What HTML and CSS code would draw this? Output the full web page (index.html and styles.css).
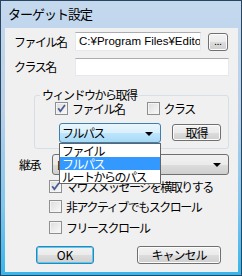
FILE: index.html
```html
<!DOCTYPE html>
<html lang="ja">
<head>
<meta charset="utf-8">
<link rel="stylesheet" href="styles.css">
</head>
<body>
<div class="win">
  <div class="titlebar">ターゲット設定</div>
  <div class="client">
    <div class="row r1">
      <span class="lbl">ファイル名</span>
      <div class="edit e1">C:¥Program Files¥Edito</div>
      <button class="btn dots">...</button>
    </div>
    <div class="row r2">
      <span class="lbl">クラス名</span>
      <div class="edit e2"></div>
    </div>
    <fieldset class="grp">
      <legend>ウィンドウから取得</legend>
      <div class="chkrow">
        <span class="chk c-file"><span class="box"><svg width="13" height="13" viewBox="0 0 13 13"><path d="M3.2 6.2 L5.4 9.2 L10 3" fill="none" stroke="#4a5d94" stroke-width="1.8"/></svg></span>ファイル名</span>
        <span class="chk c-class"><span class="box"></span>クラス</span>
      </div>
      <div class="selrow">
        <div class="combo focus">フルパス<span class="arrow"></span></div>
        <button class="btn get">取得</button>
      </div>
    </fieldset>
    <div class="row r3">
      <span class="lbl lbl3">継承</span>
      <div class="combo c2">D<span class="arrow"></span></div>
    </div>
    <div class="opts">
      <span class="chk o1"><span class="box"><svg width="13" height="13" viewBox="0 0 13 13"><path d="M3.2 6.2 L5.4 9.2 L10 3" fill="none" stroke="#4a5d94" stroke-width="1.8"/></svg></span>マウスメッセージを横取りする</span>
      <span class="chk o2"><span class="box"></span>非アクティブでもスクロール</span>
      <span class="chk o3"><span class="box"></span>フリースクロール</span>
    </div>
    <div class="btnrow">
      <button class="btn ok">OK</button>
      <button class="btn cancel">キャンセル</button>
    </div>
    <ul class="droplist">
      <li>ファイル</li>
      <li class="sel">フルパス</li>
      <li>ルートからのパス</li>
    </ul>
  </div>
</div>
</body>
</html>
```
FILE: styles.css
```css
* { box-sizing: border-box; }
html, body { margin: 0; padding: 0; }
body {
  width: 242px; height: 276px; overflow: hidden;
  font-family: "Noto Sans CJK JP", "Noto Sans", sans-serif;
  font-size: 12px; color: #000;
}
.win {
  width: 242px; height: 276px;
  border: 1px solid #2a4560;
  background: linear-gradient(#c4d9ee 0%, #b8cfe8 40%, #7fc6ee 75%, #35b6ec 100%);
  padding: 0 3px 3px 4px;
  display: flex; flex-direction: column;
}
.titlebar {
  height: 27px; line-height: 26px;
  padding-left: 3px;
  font-size: 13px; letter-spacing: -1px;
}
.client {
  position: relative;
  flex: 1;
  background: #f0f0f0;
  padding: 4px 0 0 9px;
  letter-spacing: -1.5px;
}
.row { display: flex; align-items: center; }
.lbl { width: 61px; line-height: 16px; }
.edit {
  background: #fff;
  border: 1px solid #abadb3;
  border-color: #abadb3 #e3e9ef #e3e9ef #e3e9ef;
  height: 19px;
  line-height: 17px;
  padding-left: 3px;
  letter-spacing: 0;
  font-family: "Liberation Sans", sans-serif;
  font-size: 11.5px;
  overflow: hidden; white-space: nowrap;
}
.e1 { width: 126px; }
.r2 { margin-top: 7px; }
.e2 { width: 154px; height: 18px; }
.btn {
  font-family: inherit; font-size: 12px; letter-spacing: -1px;
  color: #000;
  border: 1px solid #707070;
  border-radius: 3px;
  box-shadow: inset 0 0 0 1px #fcfcfc;
  background: linear-gradient(#f2f2f2 0%, #ebebeb 50%, #dddddd 50%, #cfcfcf 100%);
  padding: 0; margin: 0;
  line-height: 14px;
}
.dots { width: 20px; height: 18px; margin-left: 7px; font-size: 9px; letter-spacing: 0; line-height: 12px; }
.grp {
  margin: 12px 0 0 20px;
  width: 195px;
  border: 1px solid #d5dfe5;
  border-radius: 3px;
  padding: 0 0 5px 5px;
}
.grp legend {
  padding: 0 2px;
  line-height: 14px;
}
.chkrow { display: flex; height: 13px; align-items: center; }
.chk { display: flex; align-items: center; line-height: 13px; white-space: nowrap; }
.box {
  width: 13px; height: 13px;
  border: 1px solid #8e8f8f;
  background: linear-gradient(135deg, #dcdcdc 0%, #f4f4f4 80%, #fbfbfb 100%);
  box-shadow: inset 0 0 0 1px #f4f4f4;
  margin-right: 4px;
  position: relative;
  flex: none;
}
.box svg { position: absolute; left: -1px; top: -1px; }
.c-file { margin-left: 15px; }
.c-class { margin-left: 22px; }
.selrow { display: flex; margin-top: 8px; align-items: flex-start; }
.combo {
  position: relative;
  height: 20px;
  border: 1px solid #707070;
  border-radius: 3px;
  background: linear-gradient(#f2f2f2 0%, #ebebeb 50%, #dddddd 50%, #cfcfcf 100%);
  line-height: 18px;
  padding-left: 2px;
}
.combo.focus {
  width: 102px;
  margin-left: 19px;
  border-color: #3c7fb1;
  background: linear-gradient(#eaf6fd 0%, #d9f0fc 50%, #bee6fd 50%, #a7d9f5 100%);
}
.arrow {
  position: absolute; right: 7px; top: 8px;
  width: 0; height: 0;
  border-left: 4px solid transparent;
  border-right: 4px solid transparent;
  border-top: 4px solid #000;
}
.get { width: 49px; height: 17px; margin: 1px 0 0 11px; }
.r3 { margin-top: 5px; }
.lbl3 { width: 38px; padding-left: 5px; }
.c2 { width: 177px; height: 21px; line-height: 19px; padding-left: 4px; }
.c2 .arrow { top: 8px; right: 7px; }
.opts { display: flex; flex-direction: column; margin-left: 35px; margin-top: 5px; }
.o2 { margin-top: 7px; }
.o3 { margin-top: 8px; }
.btnrow { display: flex; margin-top: 12px; margin-left: 22px; }
.ok {
  width: 58px; height: 18px;
  border-color: #3c7fb1;
  box-shadow: inset 0 0 0 1px #48d1fb;
  letter-spacing: 0;
}
.cancel { width: 84px; height: 18px; margin-left: 43px; }
.droplist {
  position: absolute;
  left: 54px; top: 115px;
  width: 102px;
  margin: 0; padding: 0;
  list-style: none;
  background: #fff;
  border: 1px solid #646464;
}
.droplist li { height: 13px; line-height: 13px; padding-left: 2px; }
.droplist li.sel { background: #3399ff; color: #fff; }
```
